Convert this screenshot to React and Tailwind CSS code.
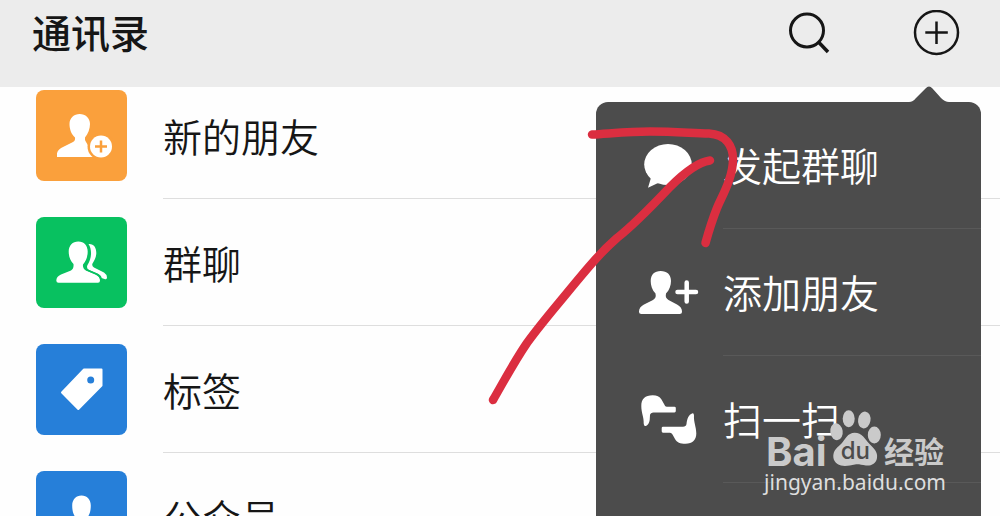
import React, { useState } from 'react'

const cjk = 'font-["Noto_Sans_CJK_SC",sans-serif]'

// Tile icons, all drawn on a 91x91 board
const NewFriendIcon = () => (
  <svg viewBox="0 0 91 91" className="h-full w-full" fill="#fff" aria-hidden="true">
    <path d="M21 67V63.500Q21.500 60 26 57.500L37 52Q39.500 50.500 39 47.500C35 44 33.500 38.500 33.500 34C33.500 28 38 24 43.700 24S54 28 54 34C54 38.500 52 44 49 47.500Q48.500 50 50 52L55 60L62 67Z" />
    <circle cx="65" cy="56.500" r="13.500" fill="#faa03c" />
    <circle cx="65" cy="56.500" r="11" />
    <path d="M65 50.500v12M59 56.500h12" stroke="#faa03c" strokeWidth="2.500" />
  </svg>
)

const GroupIcon = () => (
  <svg viewBox="0 0 91 91" className="h-full w-full" fill="#fff" aria-hidden="true">
    <path d="M52.500 27C58 26.500 60.500 31 60.300 36.500C60 41 58.500 43 56.500 46.500Q55.500 49 58 50.500L68 55.500Q71 57.500 71 60.500Q71 63 68.500 62L65.500 61Q65.500 58 60 56L53 53Q50 51.500 51.500 48C55.500 42 56.500 33 52.500 27Z" />
    <path d="M20.300 63.500Q20.300 59.500 25 57.500L35 53.500Q38 52 37.500 47C34 43.500 32.700 39 32.700 34.500C32.700 28.500 36.500 24.500 42.300 24.500S51.700 28.500 51.700 34.500C51.700 39 50.500 43.500 47 47.500Q46.500 51.500 50 53.500L59.500 57.500Q64 59.500 64 63.500Q64 65.700 62 65.700H22.500Q20.300 65.700 20.300 63.500Z" />
    <path d="M52 29C54.500 36 52.500 42.500 49 48Q48 51.500 50.500 52.700L60.500 57Q64.500 59 65 62.500" fill="none" stroke="#08c160" strokeWidth="1.700" />
  </svg>
)

const TagIcon = () => (
  <svg viewBox="0 0 91 91" className="h-full w-full" aria-hidden="true">
    <path d="M48 25.500H65.500V41.500L42.300 65L26 48.500Z" fill="#fff" stroke="#fff" strokeWidth="2" strokeLinejoin="round" />
    <circle cx="54.700" cy="36" r="3.500" fill="#267fd9" />
  </svg>
)

const OfficialIcon = () => (
  <svg viewBox="0 0 91 91" className="h-full w-full" fill="#fff" aria-hidden="true">
    <path d="M22 66Q22 59 30 56L38 53Q41 51 40 47C37 43.500 36.200 39 36.200 34.500C36.200 28.500 40 24.500 45.500 24.500S54.800 28.500 54.800 34.500C54.800 39 54 43.500 51 47Q50 51 53 53L61 56Q69 59 69 66Z" />
  </svg>
)

// Menu icons, 64x60
const ChatIcon = () => (
  <svg viewBox="0 0 64 60" className="h-[60px] w-16" fill="#fff" aria-hidden="true">
    <ellipse cx="32" cy="28.500" rx="23.800" ry="20.500" />
    <path d="M15.500 40L12 51.800L21 47.500L27 46Z" />
  </svg>
)

const AddFriendIcon = () => (
  <svg viewBox="0 0 64 60" className="h-[60px] w-16" fill="#fff" aria-hidden="true">
    <path d="M3 48.500Q3 44 8 41.500L17 37Q20.500 35 19.500 30.500C16 27 14.700 22 14.700 18C14.700 11.500 18.500 8 24.700 8S35 11.500 35 18C35 22 33.500 27 30 30.500Q29 35 32.500 37L41 41.500Q46 44 46 48.500Q46 51 43.500 51H5.500Q3 51 3 48.500Z" />
    <path d="M50.700 19.500v19M41.500 29h18.500" stroke="#fff" strokeWidth="4.500" strokeLinecap="round" />
  </svg>
)

const ScanIcon = () => (
  <svg viewBox="0 0 64 60" className="h-[60px] w-16" fill="#fff" aria-hidden="true">
    <path d="M5.300 16C5.300 9 9 5.300 16.700 5.300C21 5.300 23.500 6.500 25.500 9.500L29 15.800Q29.500 16.700 31 16.700H38.500Q39.800 16.700 39.800 18V21Q39.800 22.400 38.500 22.400H17.500Q14.500 22.400 14 25L13.700 30Q13 34.500 10 36Q7.700 36.500 7.700 33.500C8 27 5.300 23 5.300 16Z" />
    <path d="M27 36.700H47Q50 36.700 50.500 34C51 29 52.500 24.500 56.500 23.200Q58 23 58 25.500C57.500 32 60.300 37 60.300 43.500C60.300 50 56.500 53.700 49.500 53.700C44 53.700 41 52.500 39 49L36.500 44.500Q35.500 42.700 34 42.700H27Q25.700 42.700 25.700 41.300V38Q25.700 36.700 27 36.700Z" />
  </svg>
)

const contacts = [
  { label: '新的朋友', Icon: NewFriendIcon, color: 'bg-[#faa03c]' },
  { label: '群聊', Icon: GroupIcon, color: 'bg-[#08c160]' },
  { label: '标签', Icon: TagIcon, color: 'bg-[#267fd9]' },
  { label: '公众号', Icon: OfficialIcon, color: 'bg-[#267fd9]' },
]

const actions = [
  { label: '发起群聊', Icon: ChatIcon },
  { label: '添加朋友', Icon: AddFriendIcon },
  { label: '扫一扫', Icon: ScanIcon },
]

const Header = ({ onToggle, open }) => (
  <header className="relative z-10 flex h-[87px] items-center justify-between bg-[#ececec] pr-10 pb-5 pl-8">
    <h1 className="pb-1.5 text-[39px] leading-[56px] font-medium text-[#161616]">通讯录</h1>
    <div className="flex gap-20">
      <button type="button" aria-label="搜索">
        <svg viewBox="0 0 48 48" className="h-12 w-12" fill="none" stroke="#161616" aria-hidden="true">
          <circle cx="23" cy="20.500" r="16.500" strokeWidth="3" />
          <path d="M34.500 32L44 42" strokeWidth="3.500" />
        </svg>
      </button>
      <button type="button" aria-label="更多" aria-expanded={open} onClick={onToggle}>
        <svg viewBox="0 0 48 48" className="h-12 w-12" fill="none" stroke="#161616" strokeWidth="2.500" aria-hidden="true">
          <circle cx="24.500" cy="22.500" r="21.500" />
          <path d="M24.500 11.500v22.500M13.300 22.500h22.500" />
        </svg>
      </button>
    </div>
  </header>
)

// The list is scrolled a little, so its first row starts under the header
const ContactList = () => (
  <ul className="-mt-[15px]">
    {contacts.map(({ label, Icon, color }) => (
      <li key={label}>
        <button type="button" className="flex w-full items-stretch pl-9 text-left">
          <span className={`my-[18px] h-[91px] w-[91px] shrink-0 rounded-lg ${color}`}>
            <Icon />
          </span>
          <span className="ml-9 flex flex-1 items-center border-b border-[#dedede] text-[39px] leading-[56px] font-[350] text-[#161616]">
            {label}
          </span>
        </button>
      </li>
    ))}
  </ul>
)

const Paw = () => (
  <span className="relative h-[60px] w-[52px]">
    <svg viewBox="0 0 52 60" className="h-full w-full" fill="#cacaca" aria-hidden="true">
      <ellipse cx="7.500" cy="23.700" rx="6.200" ry="8.500" transform="rotate(-8 7.500 23.700)" />
      <ellipse cx="19.700" cy="10.700" rx="6" ry="8.500" />
      <ellipse cx="35.300" cy="12" rx="6.200" ry="8.500" transform="rotate(10 35.300 12)" />
      <ellipse cx="45.300" cy="27" rx="6.500" ry="8.500" />
      <path d="M25.700 24.700C33 24.700 36 31 41 36.500C45 40.500 49 44 48 50C47 56 42 58 37 57.500C32 57 30 56 26 56.500C21 57.300 17 58.500 12 57.500C6 56 3.500 51 4.500 46C5.500 41 9 39 12.500 35.500C16 31.500 18.500 24.700 25.700 24.700Z" />
    </svg>
    <span className="absolute inset-x-0 top-[31px] text-center text-2xl leading-6 font-medium text-[#4c4c4c]">du</span>
  </span>
)

const Watermark = () => (
  <div className='pointer-events-none absolute right-[54px] bottom-5 z-30 font-["Inter",sans-serif] text-[#cacaca]'>
    <div className="flex items-end justify-between pr-0.5 pl-0.5">
      <span className="text-[40px] leading-8 font-bold">Bai</span>
      <Paw />
      <span className={`${cjk} text-[30px] leading-9 font-bold`}>经验</span>
    </div>
    <p className='font-["Noto_Sans",sans-serif] text-[21px] leading-7 text-[#dedede]'>jingyan.baidu.com</p>
  </div>
)

const ActionMenu = () => (
  <nav className="absolute top-[102px] right-[19px] -bottom-4 z-20 w-[385px] rounded-xl bg-[#4c4c4c]">
    <svg viewBox="0 0 40 17" className="absolute -top-4 right-8 h-[17px] w-10" fill="#4c4c4c" aria-hidden="true">
      <path d="M0 17V16Q4 16 7 12L16.500 2.500Q20 -1.500 23.500 2.500L32 12Q36 16 40 16V17Z" />
    </svg>
    {actions.map(({ label, Icon }) => (
      <button key={label} type="button" className="flex h-[127px] w-full items-stretch pl-10 text-left">
        <span className="flex items-center">
          <Icon />
        </span>
        <span className="ml-[23px] flex flex-1 items-center border-b border-[#595959] pb-0.5 text-[39px] leading-[56px] font-[350] text-white">
          {label}
        </span>
      </button>
    ))}
    {/* hand drawn arrow pointing at the first action */}
    <svg viewBox="480 120 270 290" className="pointer-events-none absolute top-[18px] -left-[116px] h-[290px] w-[270px]" fill="none" stroke="#db2e40" strokeWidth="8.500" strokeLinecap="round" strokeLinejoin="round" aria-hidden="true">
      <path d="M592 134.500C610 133.500 630 131.500 650 131.500C675 131.500 690 133 709 133.500C726 134.500 733 146 733 159C733 178 722 196 717 208Q711 223 705.500 243" />
      <path d="M710 160.500C698 162 684 173 670 187C652 206 635 224 617 238C602 251 590 265 567 293C553 310 540 325 527 343C514 362 504 381 493 400" />
    </svg>
  </nav>
)

export default function App() {
  const [open, setOpen] = useState(true)

  return (
    <main className={`relative h-screen overflow-hidden bg-[#fefefe] ${cjk}`}>
      <Header open={open} onToggle={() => setOpen(!open)} />
      <ContactList />
      {open && <ActionMenu />}
      <Watermark />
    </main>
  )
}
